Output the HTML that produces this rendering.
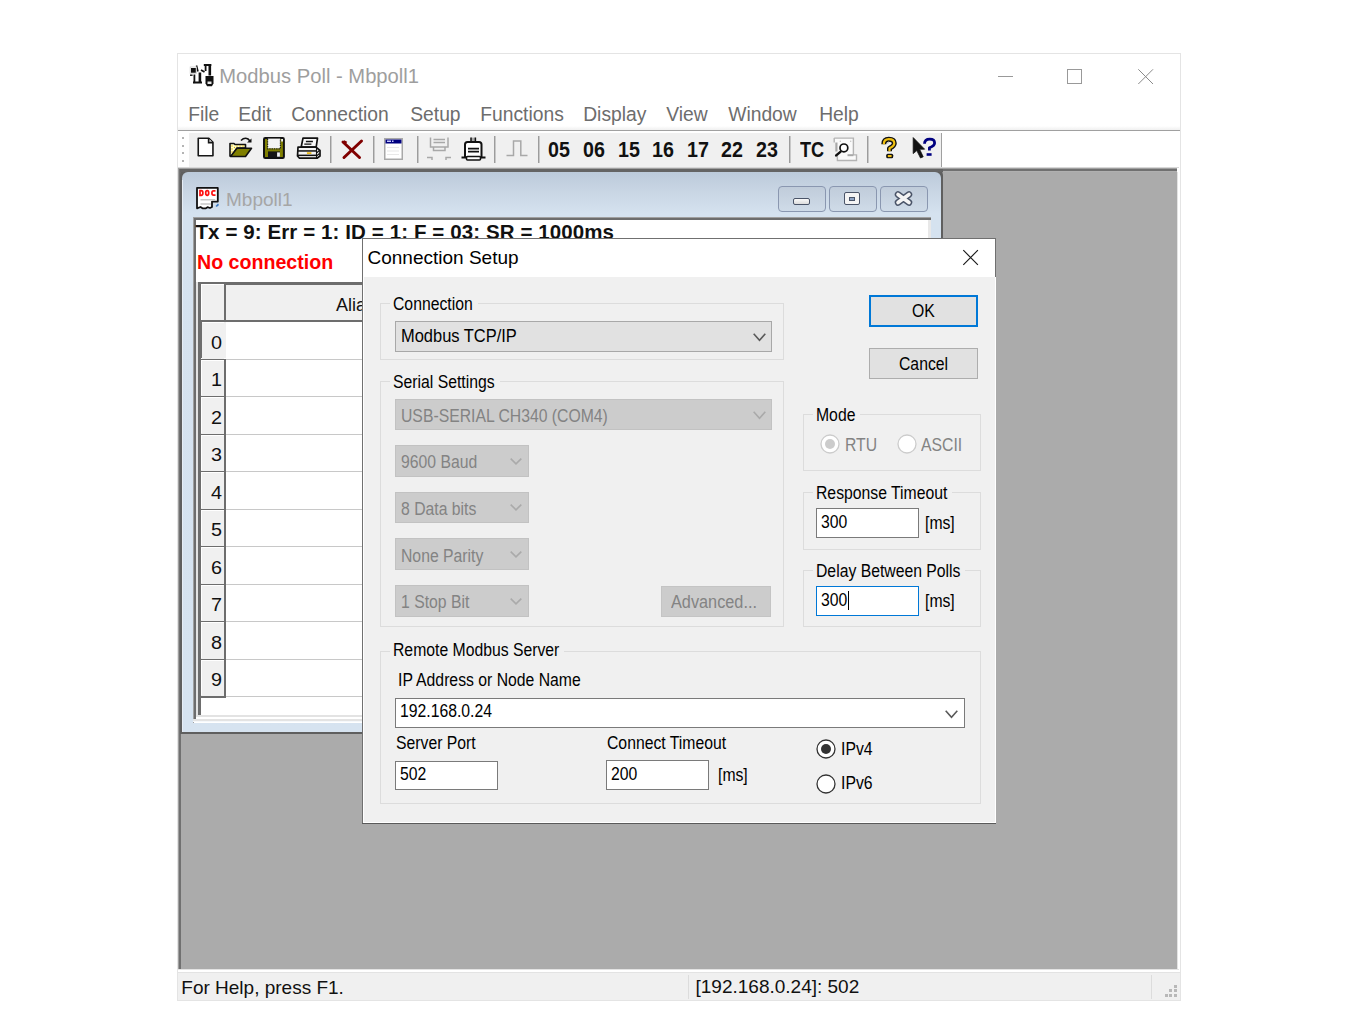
<!DOCTYPE html>
<html><head><meta charset="utf-8"><title>Modbus Poll</title>
<style>
html,body{margin:0;padding:0;}
body{width:1350px;height:1026px;overflow:hidden;background:#fff;position:relative;font-family:"Liberation Sans",sans-serif;}
.a{position:absolute;box-sizing:border-box;}
.t{white-space:nowrap;line-height:1;transform-origin:0 0;}
svg.a{overflow:visible;}
</style></head><body>
<div class="a" style="left:177px;top:53px;width:1004px;height:948px;background:#fff;border:1px solid #e4e4e4;"></div>
<div class="a t" style="left:219.3px;top:65.90px;font-size:20.2px;color:#9e9e9e;">Modbus Poll - Mbpoll1</div>
<div class="a" style="left:998px;top:76px;width:15px;height:1px;background:#999;"></div>
<div class="a" style="left:1067px;top:69px;width:15px;height:15px;border:1px solid #999;"></div>
<svg class="a" style="left:1138px;top:69px;" width="16" height="16" viewBox="0 0 16 16"><path d="M0.3 0.3L15 15M15 0.3L0.3 15" stroke="#8a8a8a" stroke-width="1"/></svg>
<div class="a t" style="left:188.2px;top:104.66px;font-size:19.3px;color:#6d6d6d;">File</div>
<div class="a t" style="left:238.2px;top:104.66px;font-size:19.3px;color:#6d6d6d;">Edit</div>
<div class="a t" style="left:291.2px;top:104.66px;font-size:19.3px;color:#6d6d6d;">Connection</div>
<div class="a t" style="left:410.2px;top:104.66px;font-size:19.3px;color:#6d6d6d;">Setup</div>
<div class="a t" style="left:480.2px;top:104.66px;font-size:19.3px;color:#6d6d6d;">Functions</div>
<div class="a t" style="left:583.2px;top:104.66px;font-size:19.3px;color:#6d6d6d;">Display</div>
<div class="a t" style="left:666.2px;top:104.66px;font-size:19.3px;color:#6d6d6d;">View</div>
<div class="a t" style="left:728.2px;top:104.66px;font-size:19.3px;color:#6d6d6d;">Window</div>
<div class="a t" style="left:819.2px;top:104.66px;font-size:19.3px;color:#6d6d6d;">Help</div>
<div class="a" style="left:178px;top:126px;width:1002px;height:4px;background:linear-gradient(#fff,#f0f0f0);"></div>
<div class="a" style="left:178px;top:130px;width:1002px;height:1px;background:#a0a0a0;"></div>
<div class="a" style="left:178px;top:131px;width:1002px;height:2px;background:#fff;"></div>
<div class="a" style="left:189px;top:133px;width:752px;height:35px;background:#f0f0f0;"></div>
<div class="a" style="left:941px;top:133px;width:1px;height:35px;background:#a0a0a0;"></div>
<div class="a" style="left:182px;top:137px;width:2px;height:2px;background:#b4b4b4;"></div>
<div class="a" style="left:182px;top:144.5px;width:2px;height:2px;background:#b4b4b4;"></div>
<div class="a" style="left:182px;top:152px;width:2px;height:2px;background:#b4b4b4;"></div>
<div class="a" style="left:182px;top:159.5px;width:2px;height:2px;background:#b4b4b4;"></div>
<div class="a" style="left:182px;top:167px;width:2px;height:2px;background:#b4b4b4;"></div>
<div class="a" style="left:330px;top:136px;width:1px;height:27px;background:#9c9c9c;"></div>
<div class="a" style="left:331px;top:136px;width:1px;height:27px;background:#c8c8c8;"></div>
<div class="a" style="left:373px;top:136px;width:1px;height:27px;background:#9c9c9c;"></div>
<div class="a" style="left:374px;top:136px;width:1px;height:27px;background:#c8c8c8;"></div>
<div class="a" style="left:417px;top:136px;width:1px;height:27px;background:#9c9c9c;"></div>
<div class="a" style="left:418px;top:136px;width:1px;height:27px;background:#c8c8c8;"></div>
<div class="a" style="left:494px;top:136px;width:1px;height:27px;background:#9c9c9c;"></div>
<div class="a" style="left:495px;top:136px;width:1px;height:27px;background:#c8c8c8;"></div>
<div class="a" style="left:538px;top:136px;width:1px;height:27px;background:#9c9c9c;"></div>
<div class="a" style="left:539px;top:136px;width:1px;height:27px;background:#c8c8c8;"></div>
<div class="a" style="left:789px;top:136px;width:1px;height:27px;background:#9c9c9c;"></div>
<div class="a" style="left:790px;top:136px;width:1px;height:27px;background:#c8c8c8;"></div>
<div class="a" style="left:867px;top:136px;width:1px;height:27px;background:#9c9c9c;"></div>
<div class="a" style="left:868px;top:136px;width:1px;height:27px;background:#c8c8c8;"></div>
<div class="a t" style="left:548px;top:138.72px;font-size:21.6px;color:#111;font-weight:bold;transform:scaleX(0.91);">05</div>
<div class="a t" style="left:583px;top:138.72px;font-size:21.6px;color:#111;font-weight:bold;transform:scaleX(0.91);">06</div>
<div class="a t" style="left:617.5px;top:138.72px;font-size:21.6px;color:#111;font-weight:bold;transform:scaleX(0.91);">15</div>
<div class="a t" style="left:652px;top:138.72px;font-size:21.6px;color:#111;font-weight:bold;transform:scaleX(0.91);">16</div>
<div class="a t" style="left:686.5px;top:138.72px;font-size:21.6px;color:#111;font-weight:bold;transform:scaleX(0.91);">17</div>
<div class="a t" style="left:721px;top:138.72px;font-size:21.6px;color:#111;font-weight:bold;transform:scaleX(0.91);">22</div>
<div class="a t" style="left:755.5px;top:138.72px;font-size:21.6px;color:#111;font-weight:bold;transform:scaleX(0.91);">23</div>
<div class="a t" style="left:799.5px;top:138.72px;font-size:21.6px;color:#111;font-weight:bold;transform:scaleX(0.84);">TC</div>
<div class="a" style="left:178px;top:168px;width:1001px;height:804px;background:#ababab;"></div>
<div class="a" style="left:178px;top:167px;width:1001px;height:1px;background:#d8d8d8;"></div>
<div class="a" style="left:942px;top:167px;width:237px;height:1px;background:#d8d8d8;"></div>
<div class="a" style="left:178px;top:168px;width:1001px;height:1px;background:#a0a0a0;"></div>
<div class="a" style="left:178px;top:169px;width:1001px;height:2px;background:#707070;"></div>
<div class="a" style="left:178px;top:171px;width:1001px;height:1px;background:#b0b0b0;"></div>
<div class="a" style="left:178px;top:168px;width:1px;height:804px;background:#a0a0a0;"></div>
<div class="a" style="left:179px;top:169px;width:2px;height:800px;background:#707070;"></div>
<div class="a" style="left:178px;top:969px;width:1001px;height:3px;background:#fff;"></div>
<div class="a" style="left:1177px;top:168px;width:2px;height:804px;background:#fff;"></div>
<div class="a" style="left:1177px;top:172px;width:1px;height:797px;background:#e3e3e3;"></div>
<div class="a" style="left:178px;top:969px;width:1001px;height:1px;background:#e3e3e3;"></div>
<div class="a" style="left:178px;top:972px;width:1002px;height:28px;background:#f0f0f0;"></div>
<div class="a" style="left:178px;top:972px;width:1002px;height:1px;background:#e3e3e3;"></div>
<div class="a t" style="left:181.3px;top:977.62px;font-size:19px;color:#111;">For Help, press F1.</div>
<div class="a" style="left:688px;top:975px;width:1px;height:24px;background:#dcdcdc;"></div>
<div class="a t" style="left:695.5px;top:977.22px;font-size:19px;color:#111;">[192.168.0.24]: 502</div>
<div class="a" style="left:1151px;top:975px;width:1px;height:24px;background:#dcdcdc;"></div>
<div class="a" style="left:1174px;top:985px;width:3px;height:3px;background:#b8b8b8;"></div>
<div class="a" style="left:1169px;top:989px;width:3px;height:3px;background:#b8b8b8;"></div>
<div class="a" style="left:1174px;top:989px;width:3px;height:3px;background:#b8b8b8;"></div>
<div class="a" style="left:1165px;top:994px;width:3px;height:3px;background:#b8b8b8;"></div>
<div class="a" style="left:1169px;top:994px;width:3px;height:3px;background:#b8b8b8;"></div>
<div class="a" style="left:1174px;top:994px;width:3px;height:3px;background:#b8b8b8;"></div>
<div class="a" style="left:180px;top:168px;width:763px;height:566px;background:#5f5f5f;border-radius:7px 7px 0 0;"></div>
<div class="a" style="left:182px;top:172px;width:759px;height:560px;background:linear-gradient(#bccada 0px,#c9d6e4 20px,#d5e2ef 42px,#d6e3f0 560px);border-radius:6px 6px 0 0;"></div>
<div class="a" style="left:182px;top:180px;width:1px;height:552px;background:#e6edf5;"></div>
<div class="a" style="left:180px;top:168px;width:763px;height:1px;background:#a0a0a0;"></div>
<div class="a" style="left:180px;top:169px;width:763px;height:3px;background:#646464;"></div>
<div class="a t" style="left:226px;top:189.92px;font-size:19px;color:#a6a6a6;">Mbpoll1</div>
<div class="a" style="left:778px;top:186px;width:48px;height:26px;background:linear-gradient(#c0ccda,#cfdbe8);border:1px solid #8a97b0;border-radius:4px;"></div>
<div class="a" style="left:829px;top:186px;width:48px;height:26px;background:linear-gradient(#c0ccda,#cfdbe8);border:1px solid #8a97b0;border-radius:4px;"></div>
<div class="a" style="left:880px;top:186px;width:48px;height:26px;background:linear-gradient(#c0ccda,#cfdbe8);border:1px solid #8a97b0;border-radius:4px;"></div>
<div class="a" style="left:793px;top:198px;width:17px;height:7px;background:linear-gradient(#fafafa,#dcdcdc);border:1.5px solid #4a5468;border-radius:2px;"></div>
<div class="a" style="left:844px;top:192px;width:16px;height:13px;background:#f4f4f4;border:1.5px solid #4a5468;border-radius:2px;"></div>
<div class="a" style="left:849px;top:196.5px;width:6px;height:4px;background:#8ea4c4;border:1px solid #4a5468;"></div>
<svg class="a" style="left:894px;top:191px;" width="19" height="15" viewBox="0 0 19 15"><path d="M4 3.5 L15 11.5 M15 3.5 L4 11.5" stroke="#4a5468" stroke-width="6.5" stroke-linecap="round"/><path d="M4 3.5 L15 11.5 M15 3.5 L4 11.5" stroke="#f4f4f4" stroke-width="3.6" stroke-linecap="round"/></svg>
<div class="a" style="left:193px;top:217px;width:738px;height:506px;background:#fff;"></div>
<div class="a" style="left:193px;top:217px;width:738px;height:1px;background:#a0a0a0;"></div>
<div class="a" style="left:193px;top:218px;width:738px;height:2px;background:#6d6d6d;"></div>
<div class="a" style="left:193px;top:217px;width:1px;height:506px;background:#a0a0a0;"></div>
<div class="a" style="left:194px;top:218px;width:2px;height:504px;background:#6d6d6d;"></div>
<div class="a" style="left:928px;top:220px;width:3px;height:503px;background:#e8e8e8;"></div>
<div class="a" style="left:193px;top:719px;width:738px;height:3px;background:#e3e3e3;"></div>
<div class="a" style="left:193px;top:721px;width:738px;height:1px;background:#f5f8fb;"></div>
<div class="a t" style="left:195.5px;top:222.15px;font-size:20.5px;color:#111;font-weight:bold;letter-spacing:0.1px;">Tx = 9: Err = 1: ID = 1: F = 03: SR = 1000ms</div>
<div class="a t" style="left:196.5px;top:252.27px;font-size:20px;color:#ff0000;font-weight:bold;transform:scaleX(0.98);">No connection</div>
<div class="a" style="left:196px;top:282px;width:732px;height:437px;background:#fff;"></div>
<div class="a" style="left:196px;top:282px;width:732px;height:3px;background:#6d6d6d;"></div>
<div class="a" style="left:196px;top:282px;width:2px;height:437px;background:#e3e3e3;"></div>
<div class="a" style="left:198px;top:282px;width:3px;height:433px;background:#6d6d6d;"></div>
<div class="a" style="left:196px;top:715px;width:732px;height:2px;background:#e3e3e3;"></div>
<div class="a" style="left:196px;top:717px;width:732px;height:2px;background:#fff;"></div>
<div class="a" style="left:201px;top:285px;width:727px;height:35px;background:#f0f0f0;"></div>
<div class="a" style="left:201px;top:320px;width:727px;height:2px;background:#6d6d6d;"></div>
<div class="a" style="left:201px;top:285px;width:24px;height:430px;background:#fff;"></div>
<div class="a" style="left:201px;top:285px;width:23px;height:35px;background:#f0f0f0;"></div>
<div class="a" style="left:224px;top:285px;width:2px;height:37px;background:#6d6d6d;"></div>
<div class="a t" style="left:336px;top:295.76px;font-size:18px;color:#111;">Alias</div>
<div class="a" style="left:201px;top:320px;width:727px;height:2px;background:#6d6d6d;"></div>
<div class="a" style="left:201px;top:322px;width:23px;height:37px;background:#f0f0f0;"></div>
<div class="a" style="left:201px;top:359px;width:25px;height:2px;background:#6d6d6d;"></div>
<div class="a" style="left:201px;top:323px;width:1px;height:36px;background:#fff;"></div>
<div class="a" style="left:201px;top:322px;width:23px;height:1px;background:#fff;"></div>
<div class="a" style="left:226px;top:359px;width:702px;height:1px;background:#c8c8c8;"></div>
<div class="a t" style="left:210.8px;top:333.56px;font-size:18px;color:#111;transform:scaleX(1.1);">0</div>
<div class="a" style="left:201px;top:360px;width:23px;height:36px;background:#f0f0f0;"></div>
<div class="a" style="left:201px;top:396px;width:25px;height:2px;background:#6d6d6d;"></div>
<div class="a" style="left:224px;top:359px;width:2px;height:38px;background:#6d6d6d;"></div>
<div class="a" style="left:201px;top:360px;width:1px;height:35px;background:#fff;"></div>
<div class="a" style="left:201px;top:360px;width:23px;height:1px;background:#fff;"></div>
<div class="a" style="left:226px;top:396px;width:702px;height:1px;background:#c8c8c8;"></div>
<div class="a t" style="left:210.8px;top:371.09px;font-size:18px;color:#111;transform:scaleX(1.1);">1</div>
<div class="a" style="left:201px;top:397px;width:23px;height:37px;background:#f0f0f0;"></div>
<div class="a" style="left:201px;top:434px;width:25px;height:2px;background:#6d6d6d;"></div>
<div class="a" style="left:224px;top:396px;width:2px;height:39px;background:#6d6d6d;"></div>
<div class="a" style="left:201px;top:397px;width:1px;height:36px;background:#fff;"></div>
<div class="a" style="left:201px;top:397px;width:23px;height:1px;background:#fff;"></div>
<div class="a" style="left:226px;top:434px;width:702px;height:1px;background:#c8c8c8;"></div>
<div class="a t" style="left:210.8px;top:408.62px;font-size:18px;color:#111;transform:scaleX(1.1);">2</div>
<div class="a" style="left:201px;top:435px;width:23px;height:36px;background:#f0f0f0;"></div>
<div class="a" style="left:201px;top:471px;width:25px;height:2px;background:#6d6d6d;"></div>
<div class="a" style="left:224px;top:434px;width:2px;height:38px;background:#6d6d6d;"></div>
<div class="a" style="left:201px;top:435px;width:1px;height:35px;background:#fff;"></div>
<div class="a" style="left:201px;top:435px;width:23px;height:1px;background:#fff;"></div>
<div class="a" style="left:226px;top:471px;width:702px;height:1px;background:#c8c8c8;"></div>
<div class="a t" style="left:210.8px;top:446.15px;font-size:18px;color:#111;transform:scaleX(1.1);">3</div>
<div class="a" style="left:201px;top:472px;width:23px;height:37px;background:#f0f0f0;"></div>
<div class="a" style="left:201px;top:509px;width:25px;height:2px;background:#6d6d6d;"></div>
<div class="a" style="left:224px;top:471px;width:2px;height:39px;background:#6d6d6d;"></div>
<div class="a" style="left:201px;top:472px;width:1px;height:36px;background:#fff;"></div>
<div class="a" style="left:201px;top:472px;width:23px;height:1px;background:#fff;"></div>
<div class="a" style="left:226px;top:509px;width:702px;height:1px;background:#c8c8c8;"></div>
<div class="a t" style="left:210.8px;top:483.68px;font-size:18px;color:#111;transform:scaleX(1.1);">4</div>
<div class="a" style="left:201px;top:510px;width:23px;height:36px;background:#f0f0f0;"></div>
<div class="a" style="left:201px;top:546px;width:25px;height:2px;background:#6d6d6d;"></div>
<div class="a" style="left:224px;top:509px;width:2px;height:38px;background:#6d6d6d;"></div>
<div class="a" style="left:201px;top:510px;width:1px;height:35px;background:#fff;"></div>
<div class="a" style="left:201px;top:510px;width:23px;height:1px;background:#fff;"></div>
<div class="a" style="left:226px;top:546px;width:702px;height:1px;background:#c8c8c8;"></div>
<div class="a t" style="left:210.8px;top:521.21px;font-size:18px;color:#111;transform:scaleX(1.1);">5</div>
<div class="a" style="left:201px;top:547px;width:23px;height:37px;background:#f0f0f0;"></div>
<div class="a" style="left:201px;top:584px;width:25px;height:2px;background:#6d6d6d;"></div>
<div class="a" style="left:224px;top:546px;width:2px;height:39px;background:#6d6d6d;"></div>
<div class="a" style="left:201px;top:547px;width:1px;height:36px;background:#fff;"></div>
<div class="a" style="left:201px;top:547px;width:23px;height:1px;background:#fff;"></div>
<div class="a" style="left:226px;top:584px;width:702px;height:1px;background:#c8c8c8;"></div>
<div class="a t" style="left:210.8px;top:558.74px;font-size:18px;color:#111;transform:scaleX(1.1);">6</div>
<div class="a" style="left:201px;top:585px;width:23px;height:36px;background:#f0f0f0;"></div>
<div class="a" style="left:201px;top:621px;width:25px;height:2px;background:#6d6d6d;"></div>
<div class="a" style="left:224px;top:584px;width:2px;height:38px;background:#6d6d6d;"></div>
<div class="a" style="left:201px;top:585px;width:1px;height:35px;background:#fff;"></div>
<div class="a" style="left:201px;top:585px;width:23px;height:1px;background:#fff;"></div>
<div class="a" style="left:226px;top:621px;width:702px;height:1px;background:#c8c8c8;"></div>
<div class="a t" style="left:210.8px;top:596.27px;font-size:18px;color:#111;transform:scaleX(1.1);">7</div>
<div class="a" style="left:201px;top:622px;width:23px;height:37px;background:#f0f0f0;"></div>
<div class="a" style="left:201px;top:659px;width:25px;height:2px;background:#6d6d6d;"></div>
<div class="a" style="left:224px;top:621px;width:2px;height:39px;background:#6d6d6d;"></div>
<div class="a" style="left:201px;top:622px;width:1px;height:36px;background:#fff;"></div>
<div class="a" style="left:201px;top:622px;width:23px;height:1px;background:#fff;"></div>
<div class="a" style="left:226px;top:659px;width:702px;height:1px;background:#c8c8c8;"></div>
<div class="a t" style="left:210.8px;top:633.80px;font-size:18px;color:#111;transform:scaleX(1.1);">8</div>
<div class="a" style="left:201px;top:660px;width:23px;height:36px;background:#f0f0f0;"></div>
<div class="a" style="left:201px;top:696px;width:25px;height:2px;background:#6d6d6d;"></div>
<div class="a" style="left:224px;top:659px;width:2px;height:38px;background:#6d6d6d;"></div>
<div class="a" style="left:201px;top:660px;width:1px;height:35px;background:#fff;"></div>
<div class="a" style="left:201px;top:660px;width:23px;height:1px;background:#fff;"></div>
<div class="a" style="left:226px;top:696px;width:702px;height:1px;background:#c8c8c8;"></div>
<div class="a t" style="left:210.8px;top:671.33px;font-size:18px;color:#111;transform:scaleX(1.1);">9</div>
<div class="a" style="left:199.5px;top:322px;width:2.2px;height:36px;background:#6d6d6d;"></div>
<div class="a" style="left:224px;top:322px;width:2px;height:36px;background:#f0f0f0;"></div>
<div class="a" style="left:201px;top:284px;width:1px;height:36px;background:#fff;"></div>
<div class="a" style="left:201px;top:284px;width:23px;height:1px;background:#fff;"></div>
<div class="a" style="left:362px;top:238px;width:634px;height:586px;background:#f0f0f0;"></div>
<div class="a" style="left:363px;top:239px;width:632px;height:38px;background:#fff;"></div>
<div class="a" style="left:362px;top:238px;width:634px;height:1px;background:#707070;"></div>
<div class="a" style="left:362px;top:238px;width:1px;height:586px;background:#707070;"></div>
<div class="a" style="left:995px;top:238px;width:1px;height:39px;background:#707070;"></div>
<div class="a" style="left:995px;top:277px;width:1px;height:546px;background:#fff;"></div>
<div class="a" style="left:363px;top:277px;width:1px;height:546px;background:#fff;"></div>
<div class="a" style="left:363px;top:822px;width:633px;height:1px;background:#fff;"></div>
<div class="a" style="left:362px;top:823px;width:634px;height:1px;background:#5a5a5a;"></div>
<div class="a t" style="left:367.5px;top:247.92px;font-size:19px;color:#000;">Connection Setup</div>
<svg class="a" style="left:963px;top:250px;" width="16" height="16" viewBox="0 0 16 16"><path d="M0.3 0.2L14.9 14.8M14.9 0.2L0.3 14.8" stroke="#1a1a1a" stroke-width="1.15"/></svg>
<div class="a" style="left:380px;top:303px;width:404px;height:57px;border:1px solid #dcdcdc;"></div>
<div class="a" style="left:381px;top:304px;width:402px;height:55px;border:1px solid #fff;border-width:0 0 0 0;"></div>
<div class="a" style="left:390px;top:300px;width:87.6809375px;height:7px;background:#f0f0f0;"></div>
<div class="a t" style="left:393px;top:296.39px;font-size:17.5px;color:#000;transform:scaleX(0.9);">Connection</div>
<div class="a" style="left:380px;top:381px;width:404px;height:246px;border:1px solid #dcdcdc;"></div>
<div class="a" style="left:381px;top:382px;width:402px;height:244px;border:1px solid #fff;border-width:0 0 0 0;"></div>
<div class="a" style="left:390px;top:378px;width:109.55234375px;height:7px;background:#f0f0f0;"></div>
<div class="a t" style="left:393px;top:374.39px;font-size:17.5px;color:#000;transform:scaleX(0.9);">Serial Settings</div>
<div class="a" style="left:803px;top:414px;width:178px;height:57px;border:1px solid #dcdcdc;"></div>
<div class="a" style="left:804px;top:415px;width:176px;height:55px;border:1px solid #fff;border-width:0 0 0 0;"></div>
<div class="a" style="left:813px;top:411px;width:47.398906249999996px;height:7px;background:#f0f0f0;"></div>
<div class="a t" style="left:816px;top:407.19px;font-size:17.5px;color:#000;transform:scaleX(0.9);">Mode</div>
<div class="a" style="left:803px;top:492px;width:178px;height:58px;border:1px solid #dcdcdc;"></div>
<div class="a" style="left:804px;top:493px;width:176px;height:56px;border:1px solid #fff;border-width:0 0 0 0;"></div>
<div class="a" style="left:812.7px;top:489px;width:139.32265625px;height:7px;background:#f0f0f0;"></div>
<div class="a t" style="left:815.7px;top:485.39px;font-size:17.5px;color:#000;transform:scaleX(0.9);">Response Timeout</div>
<div class="a" style="left:803px;top:570px;width:178px;height:57px;border:1px solid #dcdcdc;"></div>
<div class="a" style="left:804px;top:571px;width:176px;height:55px;border:1px solid #fff;border-width:0 0 0 0;"></div>
<div class="a" style="left:812.7px;top:567px;width:152.44859375px;height:7px;background:#f0f0f0;"></div>
<div class="a t" style="left:815.7px;top:563.39px;font-size:17.5px;color:#000;transform:scaleX(0.9);">Delay Between Polls</div>
<div class="a" style="left:380px;top:651px;width:601px;height:153px;border:1px solid #dcdcdc;"></div>
<div class="a" style="left:381px;top:652px;width:599px;height:151px;border:1px solid #fff;border-width:0 0 0 0;"></div>
<div class="a" style="left:390px;top:648px;width:174.32421875px;height:7px;background:#f0f0f0;"></div>
<div class="a t" style="left:393px;top:641.69px;font-size:17.5px;color:#000;transform:scaleX(0.9);">Remote Modbus Server</div>
<div class="a" style="left:395px;top:321px;width:377px;height:31px;background:#e1e1e1;border:1.5px solid #a8a8a8;"></div>
<div class="a t" style="left:401px;top:328.19px;font-size:17.5px;color:#000;transform:scaleX(0.94);">Modbus TCP/IP</div>
<svg class="a" style="left:752.5px;top:333px;" width="13" height="8" viewBox="0 0 13 8"><path d="M0.7 0.7L6.5 7.3L12.3 0.7" fill="none" stroke="#5a5a5a" stroke-width="1.6"/></svg>
<div class="a" style="left:395px;top:398.5px;width:377px;height:31.5px;background:#cccccc;border:1px solid #c2c2c2;"></div>
<div class="a t" style="left:400.5px;top:407.79px;font-size:17.5px;color:#838383;transform:scaleX(0.9);">USB-SERIAL CH340 (COM4)</div>
<svg class="a" style="left:752.5px;top:411px;" width="13" height="8" viewBox="0 0 13 8"><path d="M0.7 0.7L6.5 7.3L12.3 0.7" fill="none" stroke="#aaa" stroke-width="1.6"/></svg>
<div class="a" style="left:395px;top:445.0px;width:134px;height:31.5px;background:#cccccc;border:1px solid #c2c2c2;"></div>
<div class="a t" style="left:400.5px;top:454.19px;font-size:17.5px;color:#838383;transform:scaleX(0.9);">9600 Baud</div>
<svg class="a" style="left:510px;top:457.8px;" width="12" height="6.5" viewBox="0 0 12 6.5"><path d="M0.7 0.7L6.0 5.8L11.3 0.7" fill="none" stroke="#aaa" stroke-width="1.6"/></svg>
<div class="a" style="left:395px;top:491.67px;width:134px;height:31.5px;background:#cccccc;border:1px solid #c2c2c2;"></div>
<div class="a t" style="left:400.5px;top:500.86px;font-size:17.5px;color:#838383;transform:scaleX(0.9);">8 Data bits</div>
<svg class="a" style="left:510px;top:504.47px;" width="12" height="6.5" viewBox="0 0 12 6.5"><path d="M0.7 0.7L6.0 5.8L11.3 0.7" fill="none" stroke="#aaa" stroke-width="1.6"/></svg>
<div class="a" style="left:395px;top:538.34px;width:134px;height:31.5px;background:#cccccc;border:1px solid #c2c2c2;"></div>
<div class="a t" style="left:400.5px;top:547.53px;font-size:17.5px;color:#838383;transform:scaleX(0.9);">None Parity</div>
<svg class="a" style="left:510px;top:551.14px;" width="12" height="6.5" viewBox="0 0 12 6.5"><path d="M0.7 0.7L6.0 5.8L11.3 0.7" fill="none" stroke="#aaa" stroke-width="1.6"/></svg>
<div class="a" style="left:395px;top:585.01px;width:134px;height:31.5px;background:#cccccc;border:1px solid #c2c2c2;"></div>
<div class="a t" style="left:400.5px;top:594.20px;font-size:17.5px;color:#838383;transform:scaleX(0.9);">1 Stop Bit</div>
<svg class="a" style="left:510px;top:597.81px;" width="12" height="6.5" viewBox="0 0 12 6.5"><path d="M0.7 0.7L6.0 5.8L11.3 0.7" fill="none" stroke="#aaa" stroke-width="1.6"/></svg>
<div class="a" style="left:661px;top:586px;width:110px;height:31px;background:#cccccc;border:1px solid #c4c4c4;"></div>
<div class="a t" style="left:671px;top:594.39px;font-size:17.5px;color:#838383;transform:scaleX(0.93);">Advanced...</div>
<div class="a" style="left:869px;top:295px;width:109px;height:32px;background:#e1e1e1;border:2.5px solid #0078d7;"></div>
<div class="a t" style="left:912px;top:303.19px;font-size:17.5px;color:#000;transform:scaleX(0.9);">OK</div>
<div class="a" style="left:869px;top:348px;width:109px;height:31px;background:#e1e1e1;border:1px solid #adadad;"></div>
<div class="a t" style="left:899px;top:356.19px;font-size:17.5px;color:#000;transform:scaleX(0.9);">Cancel</div>
<svg class="a" style="left:820px;top:434px;" width="20" height="20" viewBox="0 0 20 20"><circle cx="10" cy="10" r="9" fill="#fff" stroke="#cccccc" stroke-width="1.3"/><circle cx="10" cy="10" r="5" fill="#cccccc"/></svg>
<div class="a t" style="left:845px;top:437.19px;font-size:17.5px;color:#838383;transform:scaleX(0.9);">RTU</div>
<svg class="a" style="left:897px;top:434px;" width="20" height="20" viewBox="0 0 20 20"><circle cx="10" cy="10" r="9" fill="#fff" stroke="#cccccc" stroke-width="1.3"/></svg>
<div class="a t" style="left:920.5px;top:437.19px;font-size:17.5px;color:#838383;transform:scaleX(0.9);">ASCII</div>
<div class="a" style="left:816px;top:508px;width:103px;height:30px;background:#fff;border:1px solid #7a7a7a;"></div>
<div class="a t" style="left:821px;top:514.19px;font-size:17.5px;color:#000;transform:scaleX(0.9);">300</div>
<div class="a t" style="left:924.5px;top:515.19px;font-size:17.5px;color:#000;transform:scaleX(0.9);">[ms]</div>
<div class="a" style="left:816px;top:586px;width:103px;height:30px;background:#fff;border:1px solid #0078d7;"></div>
<div class="a t" style="left:821px;top:592.19px;font-size:17.5px;color:#000;transform:scaleX(0.9);">300</div>
<div class="a" style="left:848px;top:591px;width:1.3px;height:18.5px;background:#000;"></div>
<div class="a t" style="left:924.5px;top:593.19px;font-size:17.5px;color:#000;transform:scaleX(0.9);">[ms]</div>
<div class="a t" style="left:397.5px;top:672.19px;font-size:17.5px;color:#000;transform:scaleX(0.9);">IP Address or Node Name</div>
<div class="a" style="left:395px;top:698px;width:570px;height:30px;background:#fff;border:1px solid #7a7a7a;"></div>
<div class="a t" style="left:399.5px;top:702.69px;font-size:17.5px;color:#000;transform:scaleX(0.9);">192.168.0.24</div>
<svg class="a" style="left:945px;top:710px;" width="13" height="8" viewBox="0 0 13 8"><path d="M0.7 0.7L6.5 7.3L12.3 0.7" fill="none" stroke="#5a5a5a" stroke-width="1.6"/></svg>
<div class="a t" style="left:395.5px;top:735.19px;font-size:17.5px;color:#000;transform:scaleX(0.9);">Server Port</div>
<div class="a t" style="left:606.5px;top:735.19px;font-size:17.5px;color:#000;transform:scaleX(0.9);">Connect Timeout</div>
<div class="a" style="left:395px;top:761px;width:103px;height:29px;background:#fff;border:1px solid #7a7a7a;"></div>
<div class="a t" style="left:400px;top:766.19px;font-size:17.5px;color:#000;transform:scaleX(0.9);">502</div>
<div class="a" style="left:606px;top:760px;width:103px;height:30px;background:#fff;border:1px solid #7a7a7a;"></div>
<div class="a t" style="left:611px;top:766.19px;font-size:17.5px;color:#000;transform:scaleX(0.9);">200</div>
<div class="a t" style="left:717.5px;top:766.69px;font-size:17.5px;color:#000;transform:scaleX(0.9);">[ms]</div>
<svg class="a" style="left:815.5px;top:738.5px;" width="20" height="20" viewBox="0 0 20 20"><circle cx="10" cy="10" r="9" fill="#fff" stroke="#333" stroke-width="1.3"/><circle cx="10" cy="10" r="5" fill="#333"/></svg>
<div class="a t" style="left:840.5px;top:740.69px;font-size:17.5px;color:#000;transform:scaleX(0.9);">IPv4</div>
<svg class="a" style="left:815.5px;top:773.5px;" width="20" height="20" viewBox="0 0 20 20"><circle cx="10" cy="10" r="9" fill="#fff" stroke="#333" stroke-width="1.3"/></svg>
<div class="a t" style="left:840.5px;top:775.19px;font-size:17.5px;color:#000;transform:scaleX(0.9);">IPv6</div>
<svg class="a" style="left:186px;top:60px;" width="32" height="30" viewBox="0 0 32 30">
<g fill="#111">
<rect x="5" y="8" width="4.8" height="4.8"/>
<rect x="4" y="14.5" width="2.6" height="1.4"/>
<rect x="7.5" y="14.5" width="1.8" height="8.6"/>
<rect x="7" y="21.5" width="9" height="2"/>
<rect x="12.6" y="12.5" width="2.6" height="10.5"/>
<rect x="17.8" y="4" width="7.5" height="2"/>
<rect x="22.5" y="4" width="2.6" height="11.5"/>
<rect x="18.7" y="5" width="1.8" height="6"/>
<path d="M19.5 16 h8 v7.5 l-1.6 2.8 h-4.8 l-1.6 -2.8 z"/>
</g>
<path d="M10.5 5.5 L12 11.5" stroke="#111" stroke-width="1.6"/>
<path d="M15 10 L18.5 12" stroke="#111" stroke-width="1.8"/>
<rect x="21.5" y="21.5" width="4" height="2.5" fill="#e8e8e8"/>
<rect x="4.2" y="7" width="6.2" height="6.3" fill="none" stroke="#c8c8c8" stroke-width="0.8"/>
</svg>
<svg class="a" style="left:197px;top:137px;" width="18" height="21" viewBox="0 0 18 21"><path d="M1.25 1.25 H11.8 L15.95 5.4 V18.75 H1.25 Z" fill="#fff" stroke="#161616" stroke-width="1.6" stroke-linejoin="round"/><path d="M11.6 1.3 V5.6 H15.9" fill="none" stroke="#161616" stroke-width="1.6"/><path d="M12.6 2.6 L14.6 4.6" stroke="#bbb" stroke-width="1"/></svg>
<svg class="a" style="left:228px;top:136px;" width="26" height="23" viewBox="0 0 26 23">
<path d="M2 7.5 H6 L7 8.5 H17.5 V12 H9 L4 20 H2 Z" fill="#ffffc8" stroke="#111" stroke-width="1.6" stroke-linejoin="round"/>
<g fill="#e0b000"><circle cx="4" cy="10" r=".7"/><circle cx="4" cy="13" r=".7"/><circle cx="4" cy="16" r=".7"/><circle cx="6.5" cy="11.5" r=".7"/><circle cx="9" cy="10" r=".7"/><circle cx="12" cy="10" r=".7"/><circle cx="15" cy="10" r=".7"/></g>
<path d="M9 12.2 H23.5 L17.5 20.5 H2.5 Z" fill="#808000" stroke="#111" stroke-width="1.6" stroke-linejoin="round"/>
<path d="M13 4.5 Q16.5 1 20 3 L22 5" fill="none" stroke="#111" stroke-width="1.6"/>
<path d="M19 6.5 L23.5 6.5 L23.5 2.5 Z" fill="#111"/>
</svg>
<svg class="a" style="left:263px;top:137px;" width="22" height="22" viewBox="0 0 22 22">
<rect x="1" y="1" width="19.9" height="19.9" rx="1.2" fill="#808000" stroke="#111" stroke-width="2"/>
<rect x="4.8" y="1.6" width="12.4" height="9.8" fill="#f4f4f4"/>
<path d="M4.6 2 V11.8 H17.4 V2" fill="none" stroke="#222" stroke-width="1.2" stroke-dasharray="1.3 1"/>
<rect x="5" y="14.4" width="12" height="6" fill="#161616"/>
<rect x="14.1" y="15.4" width="2.8" height="4.3" fill="#f4f4f4"/>
<rect x="18.2" y="2" width="1.8" height="2.5" fill="#f4f4f4"/>
</svg>
<svg class="a" style="left:296px;top:137px;" width="26" height="23" viewBox="0 0 26 23">
<path d="M7 1.2 H21.5 L20.2 10 H5.2 Z" fill="#f8f8f8" stroke="#111" stroke-width="1.7" stroke-linejoin="round"/>
<path d="M9.9 4.5 H16.9 M8.3 7.2 H15.4" stroke="#111" stroke-width="1.3"/>
<path d="M2 10.2 H20 L24 13.5 V19 L21 21.2 H3.5 L1.5 19 Z" fill="#f4f4f4" stroke="#111" stroke-width="1.7" stroke-linejoin="round"/>
<rect x="2" y="13.2" width="18" height="1.5" fill="#111"/>
<rect x="2" y="17.6" width="18" height="1.5" fill="#111"/>
<rect x="10.9" y="15.3" width="4.5" height="1.6" fill="#e8b400"/>
<path d="M20.5 10.5 V21 M23.5 13.5 L20.5 16 M23.5 16.5 L20.5 19" stroke="#111" stroke-width="1.1"/>
</svg>
<svg class="a" style="left:341px;top:139px;" width="23" height="21" viewBox="0 0 23 21">
<path d="M2 3 L18.5 18.5" stroke="#800000" stroke-width="3" stroke-linecap="round"/>
<path d="M20.5 2 L3 18.5" stroke="#800000" stroke-width="3" stroke-linecap="round"/>
<path d="M2.5 2.5 L5.5 4" stroke="#800000" stroke-width="3"/>
</svg>
<svg class="a" style="left:384px;top:138px;shape-rendering:auto" width="19" height="22" viewBox="0 0 19 22" shape-rendering="crispEdges">
<rect x="0.75" y="0.75" width="17.5" height="20.5" fill="#fff" stroke="#a8a8a8" stroke-width="1.5"/>
<rect x="1.5" y="1.5" width="16" height="4" fill="#000080"/>
<rect x="3" y="2.5" width="4" height="1.5" fill="#c8c8ff"/>
<rect x="8" y="2.5" width="1.5" height="1.5" fill="#c8c8ff"/>
<rect x="3" y="9" width="12" height="1" fill="#e8e8e8"/>
<rect x="3" y="12.5" width="12" height="1" fill="#e8e8e8"/>
<rect x="3" y="16" width="12" height="1" fill="#e8e8e8"/>
</svg>
<svg class="a" style="left:426px;top:137px;" width="26" height="24" viewBox="0 0 26 24">
<g fill="none" stroke="#a8a8a8" stroke-width="1.5">
<path d="M4.5 0.5 V10 H22 V0.5"/>
<path d="M7.5 2.5 H19 M7.5 5.5 H19"/>
<path d="M7.5 10 V13.5 H19 V10"/>
<path d="M1 20.5 H6 V23 M25 20.5 H20 V23"/>
</g></svg>
<svg class="a" style="left:460px;top:137px;" width="27" height="24" viewBox="0 0 27 24">
<rect x="11" y="0.6" width="4.4" height="4.6" fill="#a8a8a8"/><path d="M11 0.6 V5 M15.4 0.6 V5" stroke="#111" stroke-width="1.5"/>
<path d="M5 21 V7.5 Q5 5 7.5 5 H19 Q21.5 5 21.5 7.5 V21" fill="#fff" stroke="#111" stroke-width="2"/>
<path d="M8 11.6 H19 M8 14.6 H19" stroke="#111" stroke-width="1.7"/>
<path d="M1.5 20.5 H25.5" stroke="#111" stroke-width="2"/>
<rect x="6.5" y="19.5" width="14" height="3.5" rx="1" fill="#fff" stroke="#111" stroke-width="1.6"/>
</svg>
<svg class="a" style="left:506px;top:140px;" width="23" height="18" viewBox="0 0 23 18"><path d="M0.5 15.5 H7.5 V1 H14.8 V15.5 H21.5" fill="none" stroke="#a8a8a8" stroke-width="1.5"/></svg>
<svg class="a" style="left:833px;top:137px;" width="26" height="26" viewBox="0 0 26 26">
<path d="M1.2 1.1 H20.4 V17.9 H23.5 V23.5 H4.4 V18.5" fill="#fafafa" stroke="#b4b4b4" stroke-width="1.4"/>
<path d="M1.2 1.1 V5.5" stroke="#b4b4b4" stroke-width="1.4"/>
<path d="M3.4 5.5 V14.5" stroke="#a8a8a8" stroke-width="2.2"/>
<path d="M14.5 18.2 H20.4" stroke="#a8a8a8" stroke-width="2"/>
<circle cx="7.3" cy="4.2" r=".7" fill="#c0c0c0"/><circle cx="17.7" cy="4.2" r=".7" fill="#c0c0c0"/>
<circle cx="10.9" cy="10.9" r="3.9" fill="#fff" stroke="#111" stroke-width="1.7"/>
<path d="M3.2 18.4 L7.4 14.9" stroke="#111" stroke-width="2.5" stroke-linecap="round"/>
</svg>
<svg class="a" style="left:876px;top:134px;" width="24" height="26" viewBox="0 0 24 26">
<path d="M7.8 10.2 Q7.8 5.2 12.8 5.2 Q18.3 5.2 18.3 9.3 Q18.3 12.2 13.5 14.2 V17.2" fill="none" stroke="#111" stroke-width="5" stroke-linejoin="round"/>
<rect x="10.2" y="19.8" width="7" height="4.5" rx="1.5" fill="#111"/>
<path d="M7.8 10.2 Q7.8 5.2 12.8 5.2 Q18.3 5.2 18.3 9.3 Q18.3 12.2 13.5 14.2 V17.2" fill="none" stroke="#f0c010" stroke-width="2.2" stroke-linejoin="round"/>
<rect x="11.8" y="21" width="3.8" height="2.1" fill="#f0c010"/>
<path d="M11 9.5 L13 8" stroke="#c8c8c8" stroke-width="1.2"/>
</svg>
<svg class="a" style="left:912px;top:136px;" width="25" height="24" viewBox="0 0 25 24">
<path d="M1.2 1.6 V17.6 L4.8 14.6 L8.5 22 L11.2 20.8 L7.6 13.2 H12.6 Z" fill="#111" stroke="#111" stroke-width="0.8" stroke-linejoin="round"/>
<path d="M12.5 7.8 Q12.5 3.2 17.8 3.2 Q22.6 3.2 22.6 7 Q22.6 9.8 17.4 11.8 V14.5" fill="none" stroke="#000080" stroke-width="2.8" stroke-linejoin="round"/>
<rect x="14.6" y="17.2" width="5" height="2.6" fill="#000080"/>
</svg>
<svg class="a" style="left:196px;top:187px;" width="24" height="24" viewBox="0 0 24 24">
<path d="M1 0.9 H21.8 V14.6 H16 V20 L14 21 L11.5 20.2 L9.5 21.4 L6.5 21.3 L4.5 20 L1 21.3 Z" fill="#fff" stroke="#111" stroke-width="1.8" stroke-linejoin="round"/>
<g fill="none" stroke="#ff1010" stroke-width="1.7">
<path d="M4 3.6 V8.3 H5.2 Q6.9 8.3 6.9 6 Q6.9 3.6 5.2 3.6 Z"/>
<ellipse cx="11.2" cy="6" rx="1.5" ry="2.3"/>
<path d="M19.5 3.8 H17.6 Q15.9 3.8 15.9 6 Q15.9 8.2 17.6 8.2 H19.5"/>
</g>
<path d="M4.5 12.7 H19.2 M4.5 17 H14.8" stroke="#c8c8c8" stroke-width="1.6"/>
<path d="M19.5 19 L22 16.5 L23 18 L20.8 20 Z" fill="#3a78c0"/>
</svg>
</body></html>
